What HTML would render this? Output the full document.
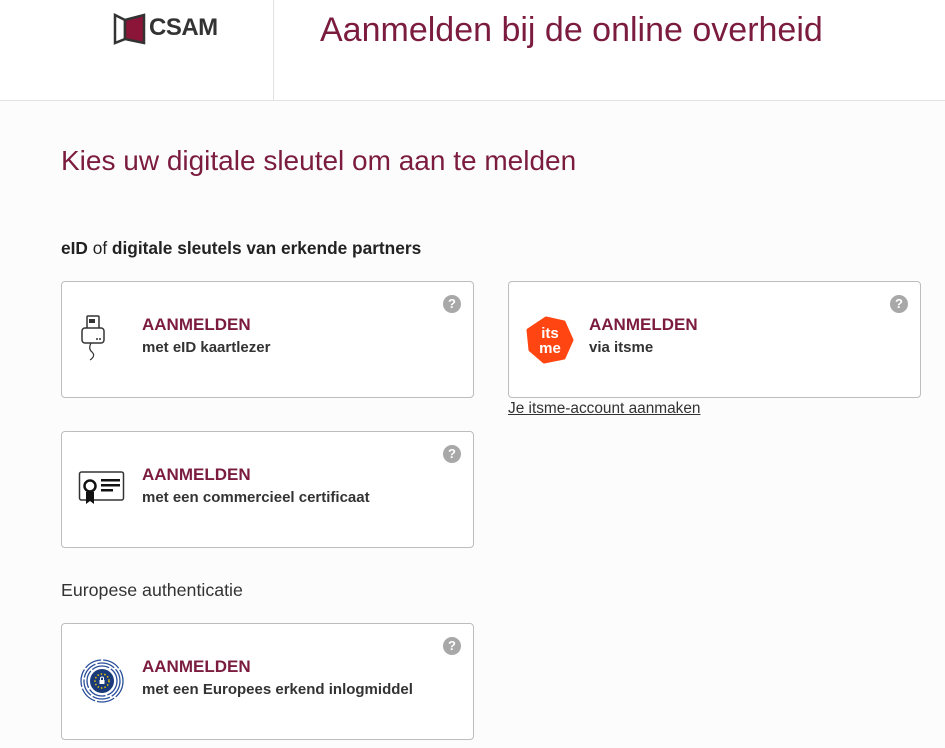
<!DOCTYPE html>
<html><head><meta charset="utf-8"><style>
*{margin:0;padding:0;box-sizing:border-box}
body{width:945px;height:748px;overflow:hidden;background:#fcfcfc;font-family:"Liberation Sans",Arial,sans-serif;color:#333;position:relative}
.hdr{position:absolute;left:0;top:0;width:945px;height:101px;background:#fff;border-bottom:1px solid #e2e2e2}
.vd{position:absolute;left:273px;top:0;width:1px;height:101px;background:#e2e2e2}
.ht{position:absolute;left:320px;top:11px;font-size:34px;color:#7b1c3f}
.logo{position:absolute;left:113px;top:13px}
.logot{position:absolute;left:149px;top:14px;font-size:24px;font-weight:bold;color:#333;letter-spacing:-0.5px}
h1{position:absolute;left:61px;top:145px;font-size:28px;font-weight:normal;color:#7b1c3f}
.sub{position:absolute;left:61px;top:238px;font-size:17.3px;color:#222}
.card{position:absolute;width:413px;height:117px;border:1px solid #bdbdbd;border-radius:4px;background:#fff}
.q{position:absolute;right:12px;top:13px;width:18px;height:18px;border-radius:50%;background:#a8a8a8;color:#fff;font-size:13px;font-weight:bold;text-align:center;line-height:18px}
.a{position:absolute;left:80px;top:33px;font-size:17px;font-weight:bold;color:#7b1c3f}
.m{position:absolute;left:80px;top:57px;font-size:15px;font-weight:bold;color:#333}
.ic{position:absolute;left:16px;top:32px}
</style></head><body>
<div class="hdr"></div><div class="vd"></div>
<svg class="logo" width="34" height="32" viewBox="0 0 34 32"><path d="M2 2 L12 7 L12 26 L2 30 Z" fill="#fff" stroke="#333" stroke-width="2.5"/><path d="M12 7 L31 2 L31 30 L12 26 Z" fill="#8a1538" stroke="#333" stroke-width="2.5"/></svg>
<div class="logot">CSAM</div>
<div class="ht">Aanmelden bij de online overheid</div>
<h1>Kies uw digitale sleutel om aan te melden</h1>
<div class="sub"><b>eID</b> of <b>digitale sleutels van erkende partners</b></div>

<div class="card" style="left:61px;top:281px"><div class="q">?</div>
<svg class="ic" width="30" height="50" viewBox="0 0 30 50"><rect x="9" y="2" width="12" height="13" rx="1" fill="#fff" stroke="#333" stroke-width="1.5"/><rect x="11" y="5" width="6" height="4" fill="#333"/><rect x="4" y="14" width="22" height="15" rx="3" fill="#fff" stroke="#333" stroke-width="1.5"/><circle cx="19" cy="25" r="1" fill="#333"/><circle cx="22" cy="25" r="1" fill="#333"/><path d="M13 29 Q10 35 14 38 Q18 42 12 46" fill="none" stroke="#333" stroke-width="1.2"/></svg>
<div class="a">AANMELDEN</div><div class="m">met eID kaartlezer</div></div>

<div class="card" style="left:508px;top:281px"><div class="q">?</div>
<svg class="ic" style="left:17px;top:34px" width="48" height="48" viewBox="0 0 48 48"><path d="M20 2 L38 6 L46 24 L38 42 L18 46 L4 34 L2 14 Z" fill="#ff4612" stroke="#ff4612" stroke-width="3" stroke-linejoin="round"/><text x="24" y="22" font-size="15" font-weight="bold" fill="#fff" text-anchor="middle" font-family="Liberation Sans">its</text><text x="24" y="37" font-size="15" font-weight="bold" fill="#fff" text-anchor="middle" font-family="Liberation Sans">me</text></svg>
<div class="a">AANMELDEN</div><div class="m">via itsme</div></div>
<div style="position:absolute;left:508px;top:400px;font-size:15.4px;color:#333;text-decoration:underline">Je itsme-account aanmaken</div>

<div class="card" style="left:61px;top:431px"><div class="q">?</div>
<svg class="ic" style="left:16px;top:38px" width="48" height="38" viewBox="0 0 48 38"><rect x="1.5" y="2" width="44" height="28" rx="2" fill="#fff" stroke="#333" stroke-width="1.5"/><circle cx="12" cy="16" r="5.5" fill="#fff" stroke="#111" stroke-width="2.5"/><path d="M8 22 L8 34 L12 31 L16 34 L16 22 Z" fill="#111"/><rect x="23" y="9" width="19" height="2.5" fill="#111"/><rect x="23" y="14" width="19" height="2.5" fill="#111"/><rect x="23" y="19" width="12" height="2.5" fill="#111"/></svg>
<div class="a">AANMELDEN</div><div class="m">met een commercieel certificaat</div></div>

<div style="position:absolute;left:61px;top:580px;font-size:17.8px;color:#333">Europese authenticatie</div>

<div class="card" style="left:61px;top:623px"><div class="q">?</div>
<svg class="ic" style="left:17px;top:34px" width="46" height="46" viewBox="0 0 46 46"><g fill="none" stroke="#2a4f9a" stroke-width="1.3" stroke-dasharray="18 2"><circle cx="23" cy="23" r="21"/><circle cx="23" cy="23" r="18"/><circle cx="23" cy="23" r="15"/></g><circle cx="23" cy="23" r="12" fill="#1a3a7a"/><circle cx="23" cy="23" r="7" fill="none" stroke="#e8c400" stroke-width="1.5" stroke-dasharray="1.5 2"/><rect x="20.5" y="22" width="5" height="4" fill="#fff"/><path d="M21.5 22 V20.5 a1.5 1.5 0 0 1 3 0 V22" fill="none" stroke="#fff"/></svg>
<div class="a">AANMELDEN</div><div class="m">met een Europees erkend inlogmiddel</div></div>
</body></html>
